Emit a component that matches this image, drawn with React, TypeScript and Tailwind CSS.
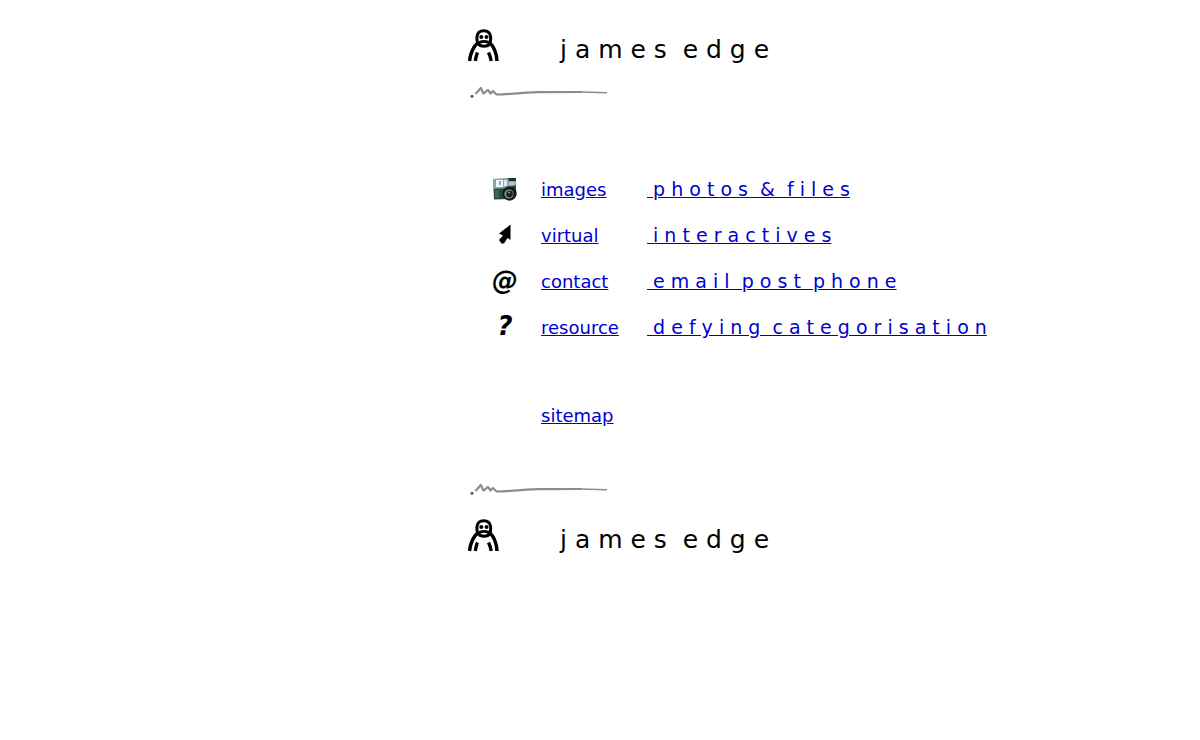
const links = [
  { icon: <CameraIcon />, label: "images", text: "p h o t o s \u00a0& \u00a0f i l e s", href: "#images" },
  { icon: <ArrowIcon />, label: "virtual", text: "i n t e r a c t i v e s", href: "#virtual" },
  { icon: <GlyphIcon glyph="@" />, label: "contact", text: "e m a i l \u00a0p o s t \u00a0p h o n e", href: "#contact" },
  { icon: <GlyphIcon glyph="?" />, label: "resource", text: "d e f y i n g \u00a0c a t e g o r i s a t i o n", href: "#resource" },
];

function Logo() {
  return (
    <svg width="32" height="34" viewBox="0 0 32 34" fill="none" stroke="#000" aria-hidden="true">
      <path d="M10.500 15.500C8.300 13.500 8.800 11 9 8.500C9.500 4.500 12.500 2.700 15.800 2.700S22 4.500 22.600 8.500C22.800 11 23.200 13.500 21 15.500" strokeWidth="3" />
      <path d="M10.500 16C12 12.500 20 12.500 21.500 16C20 19 12 19 10.500 16Z" strokeWidth="2.800" />
      <path d="M10 14.500C5 19 2.500 25 1.500 33M21.500 14.500C26.500 19 28.500 25 29 33" strokeWidth="3.500" />
      <path d="M9.500 24.500C8.500 26.500 8 29 7.300 33M20.500 24.500C21.800 27 22.500 29 23.200 33" strokeWidth="3.400" />
      <circle cx="13.300" cy="9" r="2" fill="#000" stroke="none" />
      <circle cx="18.500" cy="9" r="2" fill="#000" stroke="none" />
    </svg>
  );
}

function Squiggle() {
  return (
    <svg width="140" height="16" viewBox="0 0 140 16" fill="none" stroke="#8c8c8c" aria-hidden="true">
      <circle cx="4" cy="12.300" r="1.500" fill="#555" stroke="none" />
      <path
        d="M7.500 10L12.800 4L15.500 9.500C17 9.500 18.500 6 20 6L22.500 9.500L25 7L28.500 10.500C42 10.500 50 8.500 70 8.200L114 8"
        strokeWidth="2.200"
        strokeLinejoin="round"
      />
      <path d="M112 8L139 8.700" strokeWidth="1.400" />
    </svg>
  );
}

function CameraIcon() {
  return (
    <svg width="26" height="26" viewBox="0 0 26 26" aria-hidden="true">
      <path d="M1 2L16 1.500L24 1V17L17 22L2 22.500Z" fill="#234a42" />
      <path d="M1 2L16 1.500L24 2V8L16 11L1 12Z" fill="#8ba5ab" />
      <path d="M4 3H11V10H4Z" fill="#eef7fb" />
      <path d="M8 4V8" stroke="#4e8fb0" strokeWidth="1.500" />
      <path d="M12 3H15V9H12Z" fill="#dceaf0" />
      <path d="M16 1H24V4H17Z" fill="#26302f" />
      <path d="M17 5H23V8H17Z" fill="#b7c4c4" />
      <path d="M3 13H7V21H3Z" fill="#3b665c" />
      <circle cx="17.500" cy="16.500" r="7.200" fill="#141c1b" />
      <circle cx="17" cy="17" r="4.600" fill="#8d9c95" />
      <circle cx="17.500" cy="17" r="3.400" fill="#1b2523" />
      <path d="M16 15L18 16" stroke="#a9b8b2" />
    </svg>
  );
}

function ArrowIcon() {
  return (
    <svg width="26" height="26" viewBox="0 0 26 26" aria-hidden="true">
      <path d="M18.500 1.500L7 10.500L11 12.500L7 17L9.500 20.500H12L15.500 15L18.500 17Z" fill="#000" />
    </svg>
  );
}

function GlyphIcon({ glyph }: { glyph: string }) {
  return (
    <span
      className="block w-[26px] pb-1 text-center text-[26px] leading-7 font-bold text-black italic"
      aria-hidden="true"
    >
      {glyph}
    </span>
  );
}

function Title() {
  return (
    <div className="flex items-start">
      <Logo />
      <h2 className="ml-[60px] pt-1 text-[25px] leading-9">j a m e s &nbsp;e d g e</h2>
    </div>
  );
}

export default function App() {
  return (
    <div className="bg-white pt-7 pl-[39%] font-['DejaVu_Sans',sans-serif] text-lg text-black">
      <header>
        <Title />
        <div className="mt-4">
          <Squiggle />
        </div>
      </header>

      <main className="pt-[67px]">
        <table className="border-collapse text-left whitespace-nowrap">
          <tbody>
            {links.map(({ icon, label, text, href }) => (
              <tr key={label} className="h-[46px]">
                <td className="w-[73px] p-0 pl-6">{icon}</td>
                <td className="w-[106px] p-0">
                  <a href={href} className="text-[#0000d0] underline">
                    {label}
                  </a>
                </td>
                <td className="p-0 text-[19px]">
                  <a href={href} className="text-[#0000d0] underline">
                    &nbsp;{text}
                  </a>
                </td>
              </tr>
            ))}
          </tbody>
        </table>
        <div className="pt-[51px] pl-[73px]">
          <a href="#sitemap" className="text-[#0000d0] underline">
            sitemap
          </a>
        </div>
      </main>

      <footer className="pt-[51px]">
        <Squiggle />
        <div className="mt-[21px]">
          <Title />
        </div>
      </footer>
    </div>
  );
}
